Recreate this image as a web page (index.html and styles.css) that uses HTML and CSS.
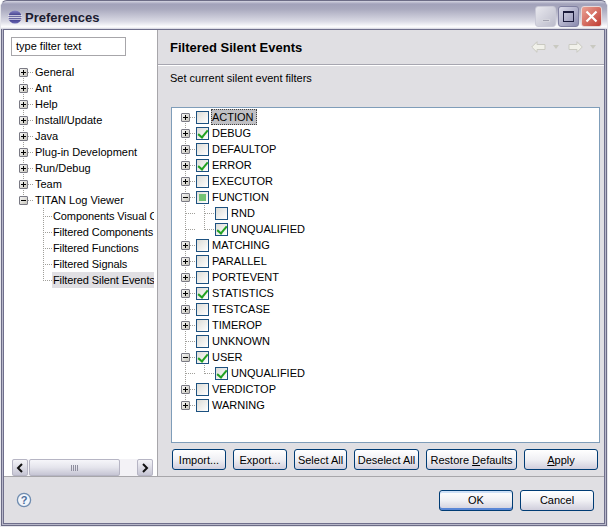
FILE: index.html
```html
<!doctype html>
<html>
<head>
<meta charset="utf-8">
<link rel="stylesheet" href="styles.css">
<title>Preferences</title>
</head>
<body>
<div class="window">
  <div class="titlebar">
    <svg class="logo" width="14" height="14" viewBox="0 0 16 16">
      <defs>
        <linearGradient id="globe" x1="0" y1="0" x2="0" y2="1">
          <stop offset="0" stop-color="#8a86c8"/>
          <stop offset="0.5" stop-color="#2b2a78"/>
          <stop offset="1" stop-color="#6a66b4"/>
        </linearGradient>
      </defs>
      <circle cx="8" cy="8" r="7.5" fill="url(#globe)"/>
      <rect x="0" y="6" width="16" height="1.2" fill="#f4f2f8"/>
      <rect x="0" y="8.2" width="16" height="1.2" fill="#f4f2f8"/>
      <rect x="1" y="10.4" width="14" height="0.9" fill="#d8d6ec"/>
    </svg>
    <span class="title">Preferences</span>
    <div class="winbtns">
      <div class="winbtn min"><span class="min-bar"></span></div>
      <div class="winbtn max"><span class="max-box"></span></div>
      <div class="winbtn close">
        <svg width="13" height="13" viewBox="0 0 13 13"><path d="M1.5 1.5 11.5 11.5M11.5 1.5 1.5 11.5" stroke="#fff" stroke-width="2.2" fill="none"/></svg>
      </div>
    </div>
  </div>

  <div class="client">
    <div class="main">
      <div class="left">
        <div class="filter">type filter text</div>
        <div class="navtree">
          <div class="row"><span class="twist first"><i class="exp plus"></i></span><span class="lbl">General</span></div>
          <div class="row"><span class="twist mid"><i class="exp plus"></i></span><span class="lbl">Ant</span></div>
          <div class="row"><span class="twist mid"><i class="exp plus"></i></span><span class="lbl">Help</span></div>
          <div class="row"><span class="twist mid"><i class="exp plus"></i></span><span class="lbl">Install/Update</span></div>
          <div class="row"><span class="twist mid"><i class="exp plus"></i></span><span class="lbl">Java</span></div>
          <div class="row"><span class="twist mid"><i class="exp plus"></i></span><span class="lbl">Plug-in Development</span></div>
          <div class="row"><span class="twist mid"><i class="exp plus"></i></span><span class="lbl">Run/Debug</span></div>
          <div class="row"><span class="twist mid"><i class="exp plus"></i></span><span class="lbl">Team</span></div>
          <div class="row"><span class="twist last"><i class="exp minus"></i></span><span class="lbl">TITAN Log Viewer</span></div>
          <div class="row"><span class="twist"></span><span class="twist sub mid"></span><span class="lbl child">Components Visual O</span></div>
          <div class="row"><span class="twist"></span><span class="twist sub mid"></span><span class="lbl child">Filtered Components</span></div>
          <div class="row"><span class="twist"></span><span class="twist sub mid"></span><span class="lbl child">Filtered Functions</span></div>
          <div class="row"><span class="twist"></span><span class="twist sub mid"></span><span class="lbl child">Filtered Signals</span></div>
          <div class="row"><span class="twist"></span><span class="twist sub last"></span><span class="lbl child sel-gray">Filtered Silent Events</span></div>
        </div>
        <div class="hscroll">
          <div class="sbtn"><svg width="8" height="10" viewBox="0 0 8 10"><path d="M6 1 2 5 6 9" stroke="#111" stroke-width="2" fill="none"/></svg></div>
          <div class="thumb"><span class="grip"></span></div>
          <div class="track"></div>
          <div class="sbtn"><svg width="8" height="10" viewBox="0 0 8 10"><path d="M2 1 6 5 2 9" stroke="#111" stroke-width="2" fill="none"/></svg></div>
        </div>
      </div>

      <div class="right">
        <div class="pagehead">
          <h2>Filtered Silent Events</h2>
          <div class="navarrows">
            <svg width="15" height="12" viewBox="0 0 15 12"><path d="M.7 6 6 .7V3.5H14V8.5H6V11.3Z" fill="#f1f1ea" stroke="#c9c9c1"/></svg>
            <i class="drop"></i>
            <svg class="arrow-next" width="15" height="12" viewBox="0 0 15 12"><path d="M14.3 6 9 .7V3.5H1V8.5H9V11.3Z" fill="#f1f1ea" stroke="#c9c9c1"/></svg>
            <i class="drop"></i>
          </div>
        </div>
        <div class="pagebody">
          <p class="desc">Set current silent event filters</p>
          <div class="evtree">
            <div class="row"><span class="twist first"><i class="exp plus"></i></span><span class="cb"></span><span class="lbl sel-focus">ACTION</span></div>
            <div class="row"><span class="twist mid"><i class="exp plus"></i></span><span class="cb on"></span><span class="lbl">DEBUG</span></div>
            <div class="row"><span class="twist mid"><i class="exp plus"></i></span><span class="cb"></span><span class="lbl">DEFAULTOP</span></div>
            <div class="row"><span class="twist mid"><i class="exp plus"></i></span><span class="cb on"></span><span class="lbl">ERROR</span></div>
            <div class="row"><span class="twist mid"><i class="exp plus"></i></span><span class="cb"></span><span class="lbl">EXECUTOR</span></div>
            <div class="row"><span class="twist mid"><i class="exp minus"></i></span><span class="cb part"></span><span class="lbl">FUNCTION</span></div>
            <div class="row"><span class="twist mid"></span><span class="twist mid"></span><span class="cb"></span><span class="lbl">RND</span></div>
            <div class="row"><span class="twist mid"></span><span class="twist last"></span><span class="cb on"></span><span class="lbl">UNQUALIFIED</span></div>
            <div class="row"><span class="twist mid"><i class="exp plus"></i></span><span class="cb"></span><span class="lbl">MATCHING</span></div>
            <div class="row"><span class="twist mid"><i class="exp plus"></i></span><span class="cb"></span><span class="lbl">PARALLEL</span></div>
            <div class="row"><span class="twist mid"><i class="exp plus"></i></span><span class="cb"></span><span class="lbl">PORTEVENT</span></div>
            <div class="row"><span class="twist mid"><i class="exp plus"></i></span><span class="cb on"></span><span class="lbl">STATISTICS</span></div>
            <div class="row"><span class="twist mid"><i class="exp plus"></i></span><span class="cb"></span><span class="lbl">TESTCASE</span></div>
            <div class="row"><span class="twist mid"><i class="exp plus"></i></span><span class="cb"></span><span class="lbl">TIMEROP</span></div>
            <div class="row"><span class="twist mid"></span><span class="cb"></span><span class="lbl">UNKNOWN</span></div>
            <div class="row"><span class="twist mid"><i class="exp minus"></i></span><span class="cb on"></span><span class="lbl">USER</span></div>
            <div class="row"><span class="twist mid"></span><span class="twist last"></span><span class="cb on"></span><span class="lbl">UNQUALIFIED</span></div>
            <div class="row"><span class="twist mid"><i class="exp plus"></i></span><span class="cb"></span><span class="lbl">VERDICTOP</span></div>
            <div class="row"><span class="twist last"><i class="exp plus"></i></span><span class="cb"></span><span class="lbl">WARNING</span></div>
          </div>
          <div class="actions">
            <button class="btn">Import...</button>
            <button class="btn">Export...</button>
            <button class="btn">Select All</button>
            <button class="btn">Deselect All</button>
            <button class="btn">Restore <u>D</u>efaults</button>
            <button class="btn"><u>A</u>pply</button>
          </div>
        </div>
      </div>
    </div>

    <div class="footer">
      <svg class="help" width="16" height="16" viewBox="0 0 16 16">
        <circle cx="8" cy="8" r="6.6" fill="#f2f5fa" stroke="#6f8cb0" stroke-width="1.3"/>
        <text x="8" y="12" text-anchor="middle" class="help-q">?</text>
      </svg>
      <div class="footbtns">
        <button class="btn default">OK</button>
        <button class="btn">Cancel</button>
      </div>
    </div>
  </div>
</div>
</body>
</html>
```

FILE: styles.css
```css
* {
    box-sizing: border-box;
}
html,
body {
    margin: 0;
    padding: 0;
    background: #fff;
}
body {
    width: 608px;
    height: 527px;
    overflow: hidden;
    font-family: "Liberation Sans", Arial, sans-serif;
    font-size: 11px;
    color: #000;
}
.window {
    height: 527px;
    display: flex;
    flex-direction: column;
    border: 1px solid #e6e6ec;
    border-top-color: #6c6c86;
    border-radius: 7px 7px 0 0;
    background: #b8b8ca;
    box-shadow: inset 1px 0 #6c6c86, inset -1px 0 #6c6c86, inset 0 -1px #6c6c86;
    padding: 0 2px 2px;
}

/* title bar */
.titlebar {
    height: 28px;
    margin: 0 -2px;
    padding: 4px 5px 0 7px;
    display: flex;
    align-items: center;
    border-radius: 6px 6px 0 0;
    background: linear-gradient(#d5d5e2 0, #a2a2ba 3px, #a9a9be 8px, #d8d8e3 20px, #fff 26px, #d0d0dc 28px);
}
.logo {
    margin-right: 3px;
}
.title {
    font-size: 13px;
    font-weight: bold;
    color: #1c1c30;
}
.winbtns {
    margin-left: auto;
    display: flex;
    gap: 2px;
    padding-bottom: 1px;
}
.winbtn {
    width: 21px;
    height: 21px;
    border-radius: 3px;
    border: 1px solid #fff;
    display: flex;
    align-items: center;
    justify-content: center;
}
.min {
    background: linear-gradient(135deg, #e8e8ee, #bcbccb);
    border-color: #c9c9d6;
    align-items: flex-end;
    padding-bottom: 4px;
}
.min-bar {
    width: 8px;
    height: 3px;
    background: #a2a2b0;
    border: 1px solid #d4d4dc;
}
.max {
    background: linear-gradient(135deg, #dcdcea, #8a8aae);
    border-color: #7f7fa0;
}
.max-box {
    width: 11px;
    height: 11px;
    border: 1px solid #1a1a3a;
    border-top-width: 2px;
}
.close {
    background: linear-gradient(135deg, #eaa294, #c03c34);
    border-color: #e6d8d8;
}

/* client area */
.client {
    flex: 1;
    min-height: 0;
    display: flex;
    flex-direction: column;
    background: #e0dfe3;
    border: 1px solid #6f6f8c;
}
.main {
    height: 447px;
    display: flex;
    border-bottom: 1px solid #a7a6aa;
}
.left {
    width: 154px;
    flex: none;
    background: #fff;
    border-right: 1px solid #a7a6aa;
    padding: 7px 0 0 7px;
    display: flex;
    flex-direction: column;
}
.filter {
    width: 115px;
    height: 19px;
    border: 1px solid #a7a6aa;
    background: #fff;
    padding-left: 4px;
    line-height: 17px;
}
.navtree {
    margin: 8px 0 0 4px;
    width: 139px;
    flex: 1;
    overflow: hidden;
}
.row {
    height: 16px;
    display: flex;
    align-items: center;
    white-space: nowrap;
}

/* tree connector cell */
.twist {
    position: relative;
    flex: none;
    width: 19px;
    height: 16px;
    display: block;
}
.twist.sub {
    width: 18px;
}
.twist.first::before,
.twist.mid::before,
.twist.last::before {
    content: "";
    position: absolute;
    left: 8px;
    width: 1px;
    background: repeating-linear-gradient(#a09f9a 0 1px, transparent 1px 2px);
}
.twist.first::before {
    top: 8px;
    bottom: 0;
}
.twist.mid::before {
    top: 0;
    bottom: 0;
}
.twist.last::before {
    top: 0;
    height: 9px;
}
.twist.sub::before {
    left: 9px;
}
.twist.first::after,
.twist.mid::after,
.twist.last::after {
    content: "";
    position: absolute;
    top: 8px;
    left: 9px;
    right: 0;
    height: 1px;
    background: repeating-linear-gradient(90deg, #a09f9a 0 1px, transparent 1px 2px);
}

/* plus/minus box */
.exp {
    position: absolute;
    z-index: 1;
    left: 4px;
    top: 4px;
    width: 9px;
    height: 9px;
    border: 1px solid #7a7a84;
    border-radius: 1px;
    background: linear-gradient(135deg, #f6f6f6, #c8c6bc);
}
.exp::before,
.exp.plus::after {
    content: "";
    position: absolute;
    background: #000;
}
.exp::before {
    left: 1px;
    top: 3px;
    width: 5px;
    height: 1px;
}
.exp.plus::after {
    left: 3px;
    top: 1px;
    width: 1px;
    height: 5px;
}

.lbl {
    padding: 0 1px;
    height: 16px;
    line-height: 16px;
}
.child {
    letter-spacing: -0.1px;
}
.sel-gray {
    background: #e0dfe3;
    flex: 1;
}

/* checkboxes */
.evtree .cb {
    flex: none;
    width: 13px;
    height: 13px;
    margin-right: 2px;
    border: 1px solid #1c5180;
    background: linear-gradient(135deg, #dcdcd7, #fff);
    position: relative;
}
.evtree .cb.on::after {
    content: "";
    position: absolute;
    left: 3px;
    top: 0;
    width: 4px;
    height: 8px;
    border: solid #21a121;
    border-width: 0 2.5px 2.5px 0;
    transform: rotate(40deg);
}
.evtree .cb.part::after {
    content: "";
    position: absolute;
    left: 2px;
    top: 2px;
    width: 7px;
    height: 7px;
    background: #73c373;
}
.sel-focus {
    background: #c0c0c4;
    outline: 1px dotted #444;
    outline-offset: -1px;
    padding: 0 3px 0 1px;
}

/* right side */
.right {
    flex: 1;
    min-width: 0;
    display: flex;
    flex-direction: column;
}
.pagehead {
    height: 35px;
    flex: none;
    display: flex;
    align-items: center;
    padding: 0 8px 0 12px;
    border-bottom: 1px solid #a7a6b0;
    box-shadow: 0 1px 0 #fff;
}
.pagehead h2 {
    margin: 0;
    font-size: 13px;
    font-weight: bold;
}
.navarrows {
    margin-left: auto;
    display: flex;
    align-items: center;
}
.drop {
    width: 0;
    height: 0;
    margin-left: 7px;
    border: 3px solid transparent;
    border-top: 4px solid #c9c9c1;
    border-bottom: 0;
}
.arrow-next {
    margin-left: 9px;
}
.pagebody {
    flex: 1;
    min-height: 0;
    padding: 6px 4px 0 13px;
    display: flex;
    flex-direction: column;
}
.desc {
    margin: 0 0 22px -1px;
    height: 14px;
    line-height: 14px;
}
.evtree {
    height: 336px;
    background: #fff;
    border: 1px solid #7f9db9;
    padding: 1px 0 0 5px;
}
.actions {
    margin: 6px 0 0 1px;
    display: grid;
    grid-template-columns: 54px 54px 53px 65px 91px 74px;
    gap: 7px;
}

/* buttons */
.btn {
    height: 21px;
    padding: 0;
    font: inherit;
    color: #000;
    border: 1px solid #003c74;
    border-radius: 3px;
    background: linear-gradient(#fff, #f0f0f4 50%, #d0cedc);
}
.btn.default {
    box-shadow: inset 0 2px 0 #cfe0f6, inset 0 -2px 0 #5a86d6;
}

/* footer */
.footer {
    flex: 1;
    display: flex;
    align-items: center;
    padding: 0 10px 0 12px;
}
.help-q {
    font: bold 11px "Liberation Sans", Arial, sans-serif;
    fill: #4a6d9c;
}
.footbtns {
    margin-left: auto;
    display: flex;
    gap: 7px;
}
.footbtns .btn {
    width: 74px;
}

/* horizontal scrollbar */
.hscroll {
    margin-left: 1px;
    width: 141px;
    height: 17px;
    flex: none;
    display: flex;
    background: #f3f2f6;
}
.sbtn {
    width: 16px;
    flex: none;
    display: flex;
    align-items: center;
    justify-content: center;
    border: 1px solid #b6b5c4;
    border-radius: 2px;
    background: linear-gradient(#f4f4f8, #c6c5d4);
}
.thumb {
    width: 91px;
    margin-left: 1px;
    display: flex;
    align-items: center;
    justify-content: center;
    border: 1px solid #b6b5c4;
    border-radius: 2px;
    background: linear-gradient(#f6f6fa, #e4e4ec 50%, #c6c5d4);
}
.grip {
    width: 7px;
    height: 6px;
    background: repeating-linear-gradient(90deg, #8e8e9e 0 1px, transparent 1px 2px);
}
.track {
    flex: 1;
}
```
